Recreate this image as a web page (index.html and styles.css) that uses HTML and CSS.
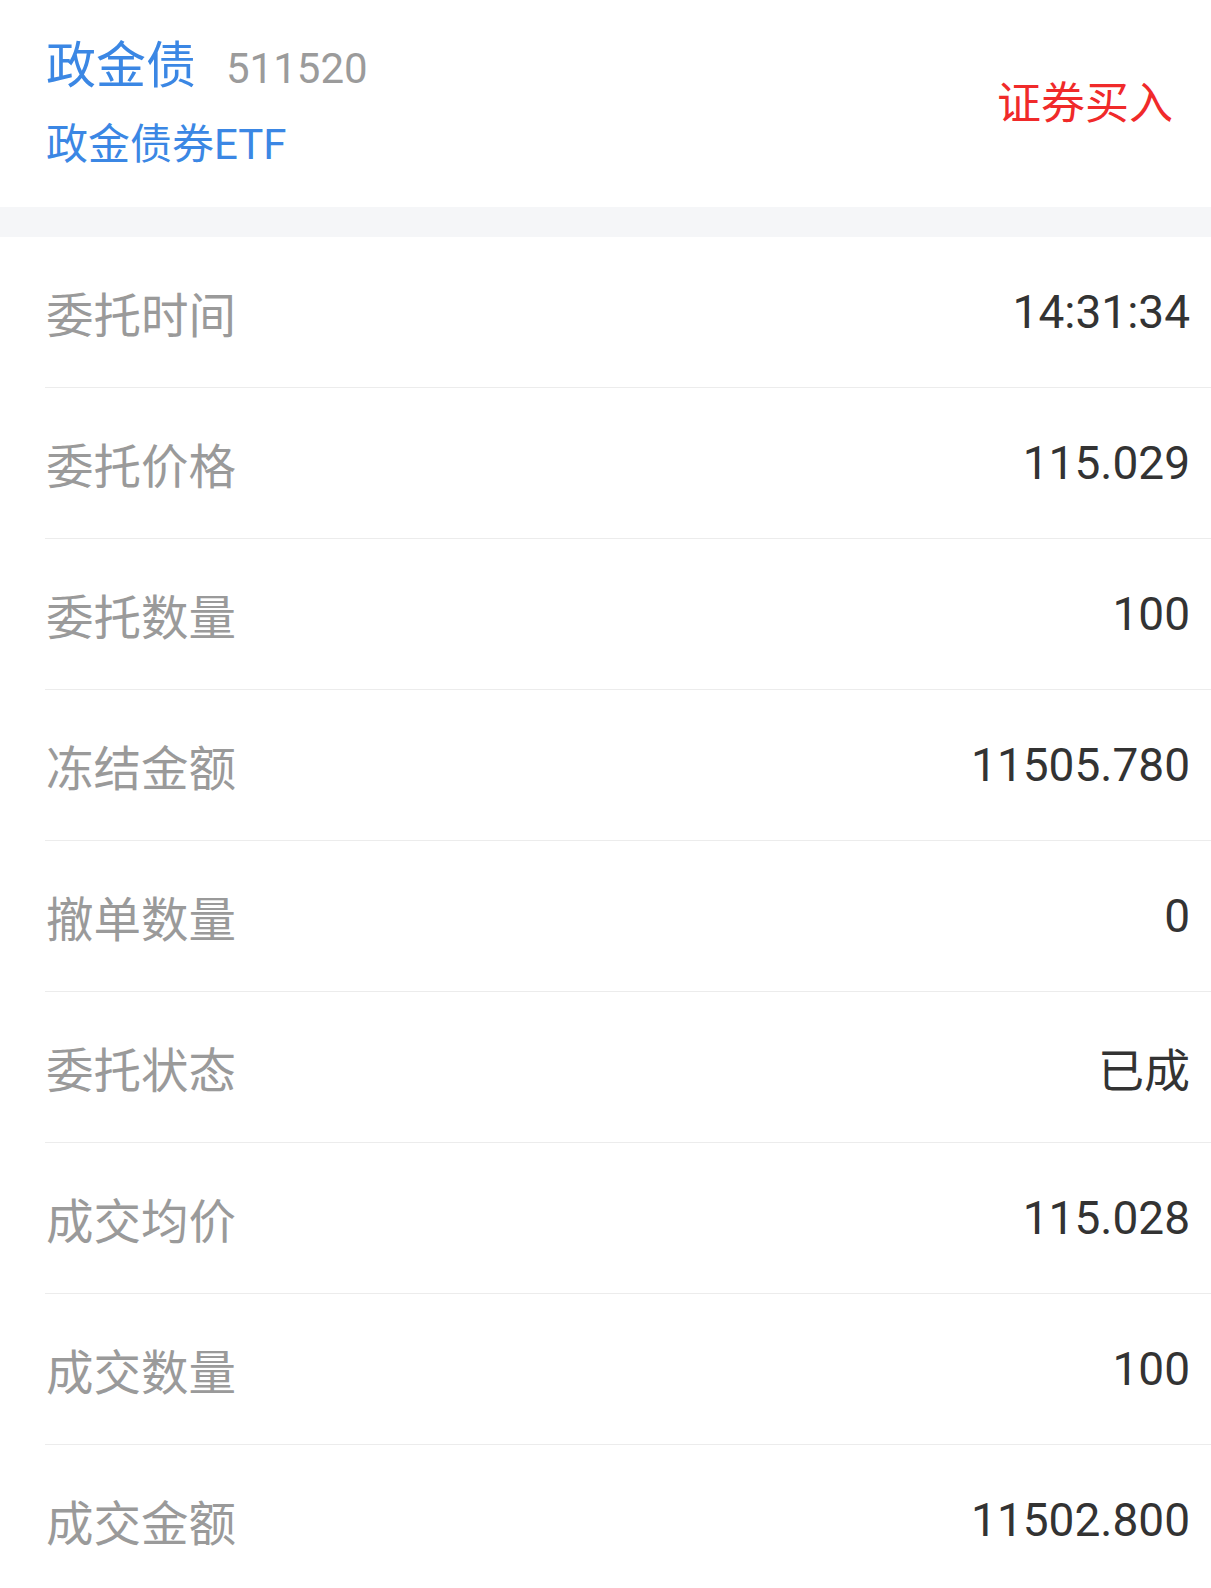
FILE: index.html
```html
<!DOCTYPE html>
<html lang="zh-CN">
<head>
  <meta charset="UTF-8">
  <title>委托详情</title>
  <link rel="stylesheet" href="styles.css">
</head>
<body>
  <!-- 标题 -->
  <div class="header">
    <div class="stock">
      <div class="title-line">
        <span class="stock-name">政金债</span>
        <span class="stock-code">511520</span>
      </div>
      <div class="stock-full">政金债券ETF</div>
    </div>
    <div class="trade-type">证券买入</div>
  </div>

  <div class="gap"></div>

  <!-- 委托明细 -->
  <div class="detail">
    <div class="row"><span class="label">委托时间</span><span class="value">14:31:34</span></div>
    <div class="row"><span class="label">委托价格</span><span class="value">115.029</span></div>
    <div class="row"><span class="label">委托数量</span><span class="value">100</span></div>
    <div class="row"><span class="label">冻结金额</span><span class="value">11505.780</span></div>
    <div class="row"><span class="label">撤单数量</span><span class="value">0</span></div>
    <div class="row"><span class="label">委托状态</span><span class="value">已成</span></div>
    <div class="row"><span class="label">成交均价</span><span class="value">115.028</span></div>
    <div class="row"><span class="label">成交数量</span><span class="value">100</span></div>
    <div class="row"><span class="label">成交金额</span><span class="value">11502.800</span></div>
  </div>
</body>
</html>
```

FILE: styles.css
```css
body {
  margin: 0;
  background-color: white;
  font-family: Roboto, "Noto Sans CJK SC", sans-serif;
  overflow: hidden;
}

.header {
  height: 207px;
  box-sizing: border-box;
  padding: 0 38px 0 46px;
  display: flex;
  justify-content: space-between;
  align-items: center;
}

.stock {
  display: flex;
  flex-direction: column;
  margin-top: -1px;
}

.title-line {
  display: flex;
  align-items: baseline;
  line-height: 56px;
  height: 56px;
}

.stock-name {
  font-size: 50px;
  color: #3b87e4;
}

.stock-code {
  font-size: 42px;
  color: #9b9b9b;
  margin-left: 30px;
}

.stock-full {
  margin-top: 27px;
  font-size: 42px;
  line-height: 48px;
  color: #3b87e4;
}

.trade-type {
  font-size: 44px;
  color: #f02a2a;
  margin-bottom: 7px;
}

.gap {
  height: 30px;
  background-color: #f5f6f8;
}

.row {
  margin-left: 45px;
  padding: 0 21px 0 1px;
  height: 150px;
  border-bottom: 1px solid #ececec;
  display: flex;
  justify-content: space-between;
  align-items: center;
}

.label {
  font-size: 47.5px;
  color: #9a9a9a;
}

.value {
  font-size: 46px;
  color: #333;
}
```
